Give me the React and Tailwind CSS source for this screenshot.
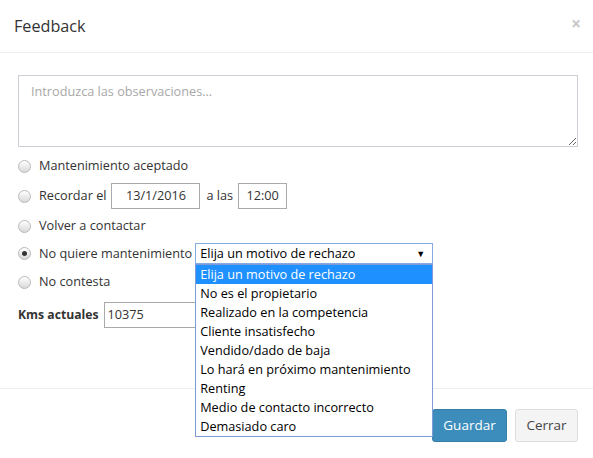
import React from 'react';

const font = { fontFamily: '"Open Sans", "Noto Sans", Arial, sans-serif' };

const MOTIVOS = [
  'Elija un motivo de rechazo',
  'No es el propietario',
  'Realizado en la competencia',
  'Cliente insatisfecho',
  'Vendido/dado de baja',
  'Lo hará en próximo mantenimiento',
  'Renting',
  'Medio de contacto incorrecto',
  'Demasiado caro',
];

const Radio = ({ checked }) => (
  <span className="w-[13px] h-[13px] rounded-full border border-[#b9b9b9] bg-gradient-to-b from-white to-[#d8d8d8] flex items-center justify-center shrink-0">
    {checked && <span className="w-[5px] h-[5px] rounded-full bg-[#333]" />}
  </span>
);

export default function App() {
  return (
    <div className="w-[593px] h-[458px] bg-white text-[12.7px] text-[#333] overflow-hidden" style={font}>
      <div className="h-[53px] border-b border-[#eeeeee] flex items-center justify-between pl-[14px] pr-[12px]">
        <h4 className="text-[16.2px] text-[#333] leading-none">Feedback</h4>
        <span className="text-[#c8c8c8] text-[17px] font-bold leading-none -mt-[6px]">×</span>
      </div>

      <div className="pl-[18px] pr-[15px] pt-[22px] h-[335px]">
        <textarea
          placeholder="Introduzca las observaciones..."
          className="block w-[560px] h-[72px] border border-[#ccd0d6] px-[12px] py-[6px] text-[12.7px] placeholder-[#a8a8a8] outline-none"
          style={font}
        />

        <div className="flex items-center gap-[8px] h-[20px] mt-[9px]">
          <Radio />
          <span>Mantenimiento aceptado</span>
        </div>

        <div className="flex items-center h-[26px] mt-[7px]">
          <Radio />
          <span className="ml-[8px]">Recordar el</span>
          <span className="ml-[5px] w-[89px] h-[26px] border border-[#aaaaaa] flex items-center justify-center">13/1/2016</span>
          <span className="ml-[6px]">a las</span>
          <span className="ml-[5px] w-[49px] h-[26px] border border-[#aaaaaa] flex items-center justify-center">12:00</span>
        </div>

        <div className="flex items-center gap-[8px] h-[20px] mt-[7px]">
          <Radio />
          <span>Volver a contactar</span>
        </div>

        <div className="flex items-center h-[21px] mt-[7px]">
          <Radio checked />
          <span className="ml-[8px]">No quiere mantenimiento</span>
          <div className="relative ml-[3px]">
            <div className="w-[238px] h-[21px] border border-[#86a9e2] flex items-center justify-between pl-[4px] pr-[7px] text-black">
              <span>Elija un motivo de rechazo</span>
              <span className="text-[9px] leading-none">▼</span>
            </div>
            <div className="absolute left-0 top-[21px] w-[238px] border border-[#7d9bd6] bg-white z-10 text-black">
              {MOTIVOS.map((m, i) => (
                <div
                  key={m}
                  className={`h-[19px] leading-[19px] pl-[4px] ${i === 0 ? 'bg-[#1e90ff] text-white' : ''}`}
                >
                  {m}
                </div>
              ))}
            </div>
          </div>
        </div>

        <div className="flex items-center gap-[8px] h-[20px] mt-[8px]">
          <Radio />
          <span>No contesta</span>
        </div>

        <div className="flex items-center h-[26px] mt-[10px]">
          <span className="font-bold text-[12.2px]">Kms actuales</span>
          <span className="ml-[5px] w-[200px] h-[26px] border border-[#aaaaaa] flex items-center pl-[3px]">10375</span>
        </div>
      </div>

      <div className="border-t border-[#eeeeee] pt-[20px] pr-[15px] flex justify-end gap-[8px]">
        <button className="w-[75px] h-[33px] rounded-[3px] bg-[#3c8dbc] border border-[#367fa9] text-white text-[13.5px]" style={font}>
          Guardar
        </button>
        <button className="w-[63px] h-[33px] rounded-[3px] bg-[#f4f4f4] border border-[#dddddd] text-[#444] text-[13.5px]" style={font}>
          Cerrar
        </button>
      </div>
    </div>
  );
}
